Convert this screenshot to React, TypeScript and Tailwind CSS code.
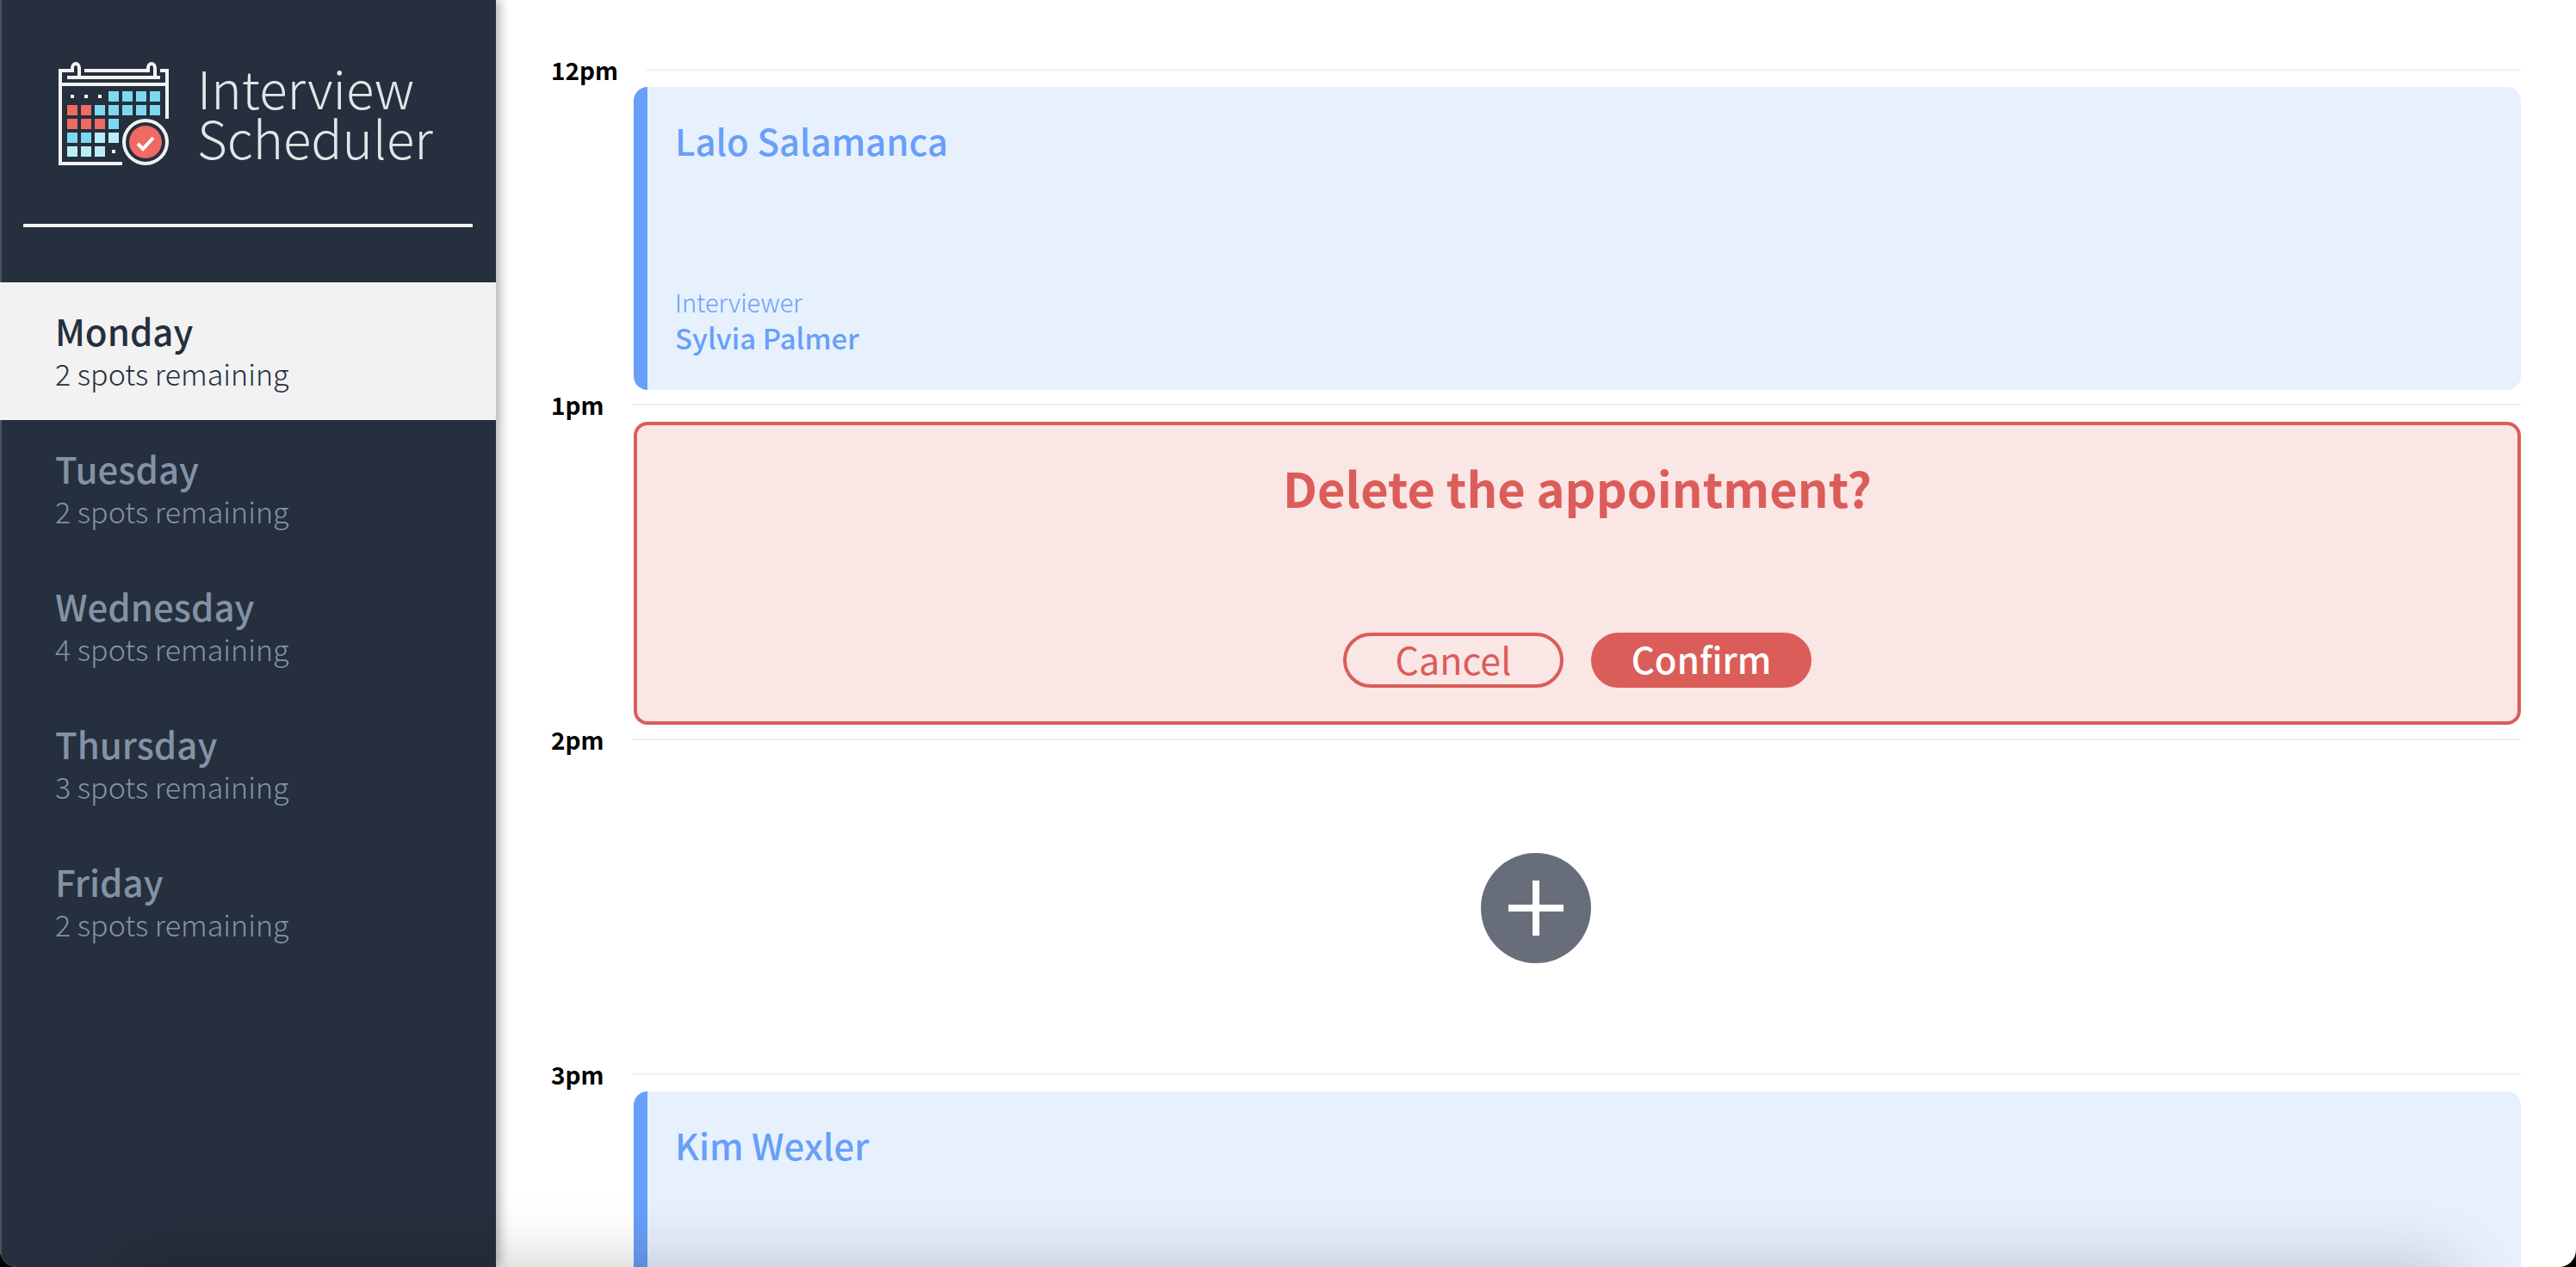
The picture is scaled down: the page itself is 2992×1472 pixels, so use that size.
import React from "react";

type Day = { name: string; spots: number };

const days: Day[] = [
  { name: "Monday", spots: 2 },
  { name: "Tuesday", spots: 2 },
  { name: "Wednesday", spots: 4 },
  { name: "Thursday", spots: 3 },
  { name: "Friday", spots: 2 },
];

const RED = "#ee6a62";
const BLUE = "#7dd9f0";
const PALE = "#b9eef9";

const cells: (string | null)[][] = [
  [null, null, null, BLUE, BLUE, BLUE, BLUE],
  [RED, RED, BLUE, BLUE, BLUE, BLUE, BLUE],
  [RED, RED, RED, BLUE],
  [BLUE, BLUE, PALE, PALE],
  [PALE, PALE, PALE, null],
];

function CalendarLogo() {
  return (
    <svg viewBox="0 0 128 120" className="h-[120px] w-32 shrink-0" aria-hidden="true">
      <g fill="none" stroke="#f2f2f2" strokeWidth="4">
        <path d="M16 10H2V118H74" />
        <path d="M30 10H104M118 10H126V66" />
        <path d="M10 18H118M2 26H126" />
        <path d="M16 12V7a4 5 0 0 1 8 0V18" />
        <path d="M104 12V7a4 5 0 0 1 8 0V18" />
        <circle cx="101" cy="93" r="25" />
      </g>
      {cells.map((row, r) =>
        row.map((fill, c) =>
          fill ? (
            <rect key={`${r}-${c}`} x={10 + c * 16} y={34 + r * 16} width="12" height="12" fill={fill} />
          ) : (
            <rect key={`${r}-${c}`} x={14 + c * 16} y={38 + r * 16} width="4" height="4" fill="#f2f2f2" />
          )
        )
      )}
      <circle cx="101" cy="93" r="19" fill={RED} />
      <path d="M92 95L98 101L110 88" fill="none" stroke="#fff" strokeWidth="4" />
    </svg>
  );
}

function Sidebar() {
  return (
    <aside className="relative z-10 flex w-[576px] shrink-0 flex-col border-l-2 border-[#4b5560] bg-[#252f3d] shadow-[4px_0_12px_rgba(37,47,61,0.4)]">
      <a href="#home" className="flex h-[192px] gap-[33px] pt-[72px] pl-[66px] text-[#e4e5e7]">
        <CalendarLogo />
        <span className="text-[60px] leading-[58px] font-extralight">
          Interview
          <br />
          Scheduler
        </span>
      </a>
      <hr className="mr-[27px] ml-[25px] mt-[68px] border-t-4 border-[#f2f2f2]" />
      <nav className="mt-16">
        <ul>
          {days.map((day, i) => (
            <li
              key={day.name}
              className={i === 0 ? "-ml-0.5 bg-[#f2f2f2] pl-0.5 text-[#252f3d]" : "text-[#8392a5]"}
            >
              <button
                type="button"
                aria-pressed={i === 0}
                className="flex h-40 w-full flex-col justify-center pl-[62px] text-left"
              >
                <span className="text-[42px] leading-[52px] font-medium">{day.name}</span>
                <span className="text-[34px] leading-[48px] font-light">{day.spots} spots remaining</span>
              </button>
            </li>
          ))}
        </ul>
      </nav>
    </aside>
  );
}

function Slot({ time, children }: { time: string; children: React.ReactNode }) {
  return (
    <section>
      <header className="flex h-[37px] items-center gap-8 pb-1">
        <h2 className="text-[28px] leading-8 font-bold text-black">{time}</h2>
        <hr className="flex-1 border-t-2 border-[#f2f2f2]" />
      </header>
      {children}
    </section>
  );
}

function Booked({ student, interviewer }: { student: string; interviewer?: string }) {
  return (
    <article className="ml-24 flex h-[352px] flex-col justify-between rounded-2xl border-l-[16px] border-[#689ff8] bg-[#e7f1fe] px-8 pt-8 pb-10 text-[#689ff8]">
      <h3 className="text-[42px] leading-[60px] font-medium">{student}</h3>
      {interviewer && (
        <div>
          <p className="text-[29px] leading-[42px] font-light">Interviewer</p>
          <p className="text-[33px] leading-[42px] font-medium">{interviewer}</p>
        </div>
      )}
    </article>
  );
}

function ConfirmDelete() {
  return (
    <article className="ml-24 flex h-[352px] flex-col items-center justify-between rounded-2xl border-4 border-[#db5d59] bg-[#fae6e5] pt-8 pb-[39px] text-[#db5d59]">
      <h3 className="text-[56px] leading-[80px] font-bold">Delete the appointment?</h3>
      <div className="flex gap-8">
        <button type="button" className="h-16 w-64 rounded-full border-4 border-[#db5d59] pb-1 text-[43px] leading-[52px]">
          Cancel
        </button>
        <button
          type="button"
          className="h-16 w-64 rounded-full border-4 border-[#db5d59] bg-[#db5d59] pb-1 text-[42px] leading-[52px] font-medium text-white"
        >
          Confirm
        </button>
      </div>
    </article>
  );
}

function Empty() {
  return (
    <article className="flex h-[352px] items-center justify-center">
      <button type="button" aria-label="Add appointment">
        <svg viewBox="0 0 128 128" className="size-32">
          <circle cx="64" cy="64" r="64" fill="#686e79" />
          <path d="M32 64H96M64 32V96" stroke="#fff" strokeWidth="8" />
        </svg>
      </button>
    </article>
  );
}

export default function App() {
  return (
    <div className="h-screen bg-black">
      <div className="relative flex h-full overflow-hidden rounded-b-[20px] bg-white font-['Source_Sans_Pro','Noto_Sans_CJK_SC',sans-serif]">
        <Sidebar />
        <main className="flex-1 overflow-hidden px-16 pt-16">
          <Slot time="12pm">
            <Booked student="Lalo Salamanca" interviewer="Sylvia Palmer" />
          </Slot>
          <Slot time="1pm">
            <ConfirmDelete />
          </Slot>
          <Slot time="2pm">
            <Empty />
          </Slot>
          <Slot time="3pm">
            <Booked student="Kim Wexler" />
          </Slot>
        </main>
        <div className="pointer-events-none absolute inset-x-36 top-full z-20 h-40 shadow-[0_0_80px_rgba(0,0,0,0.22)]" />
      </div>
    </div>
  );
}
